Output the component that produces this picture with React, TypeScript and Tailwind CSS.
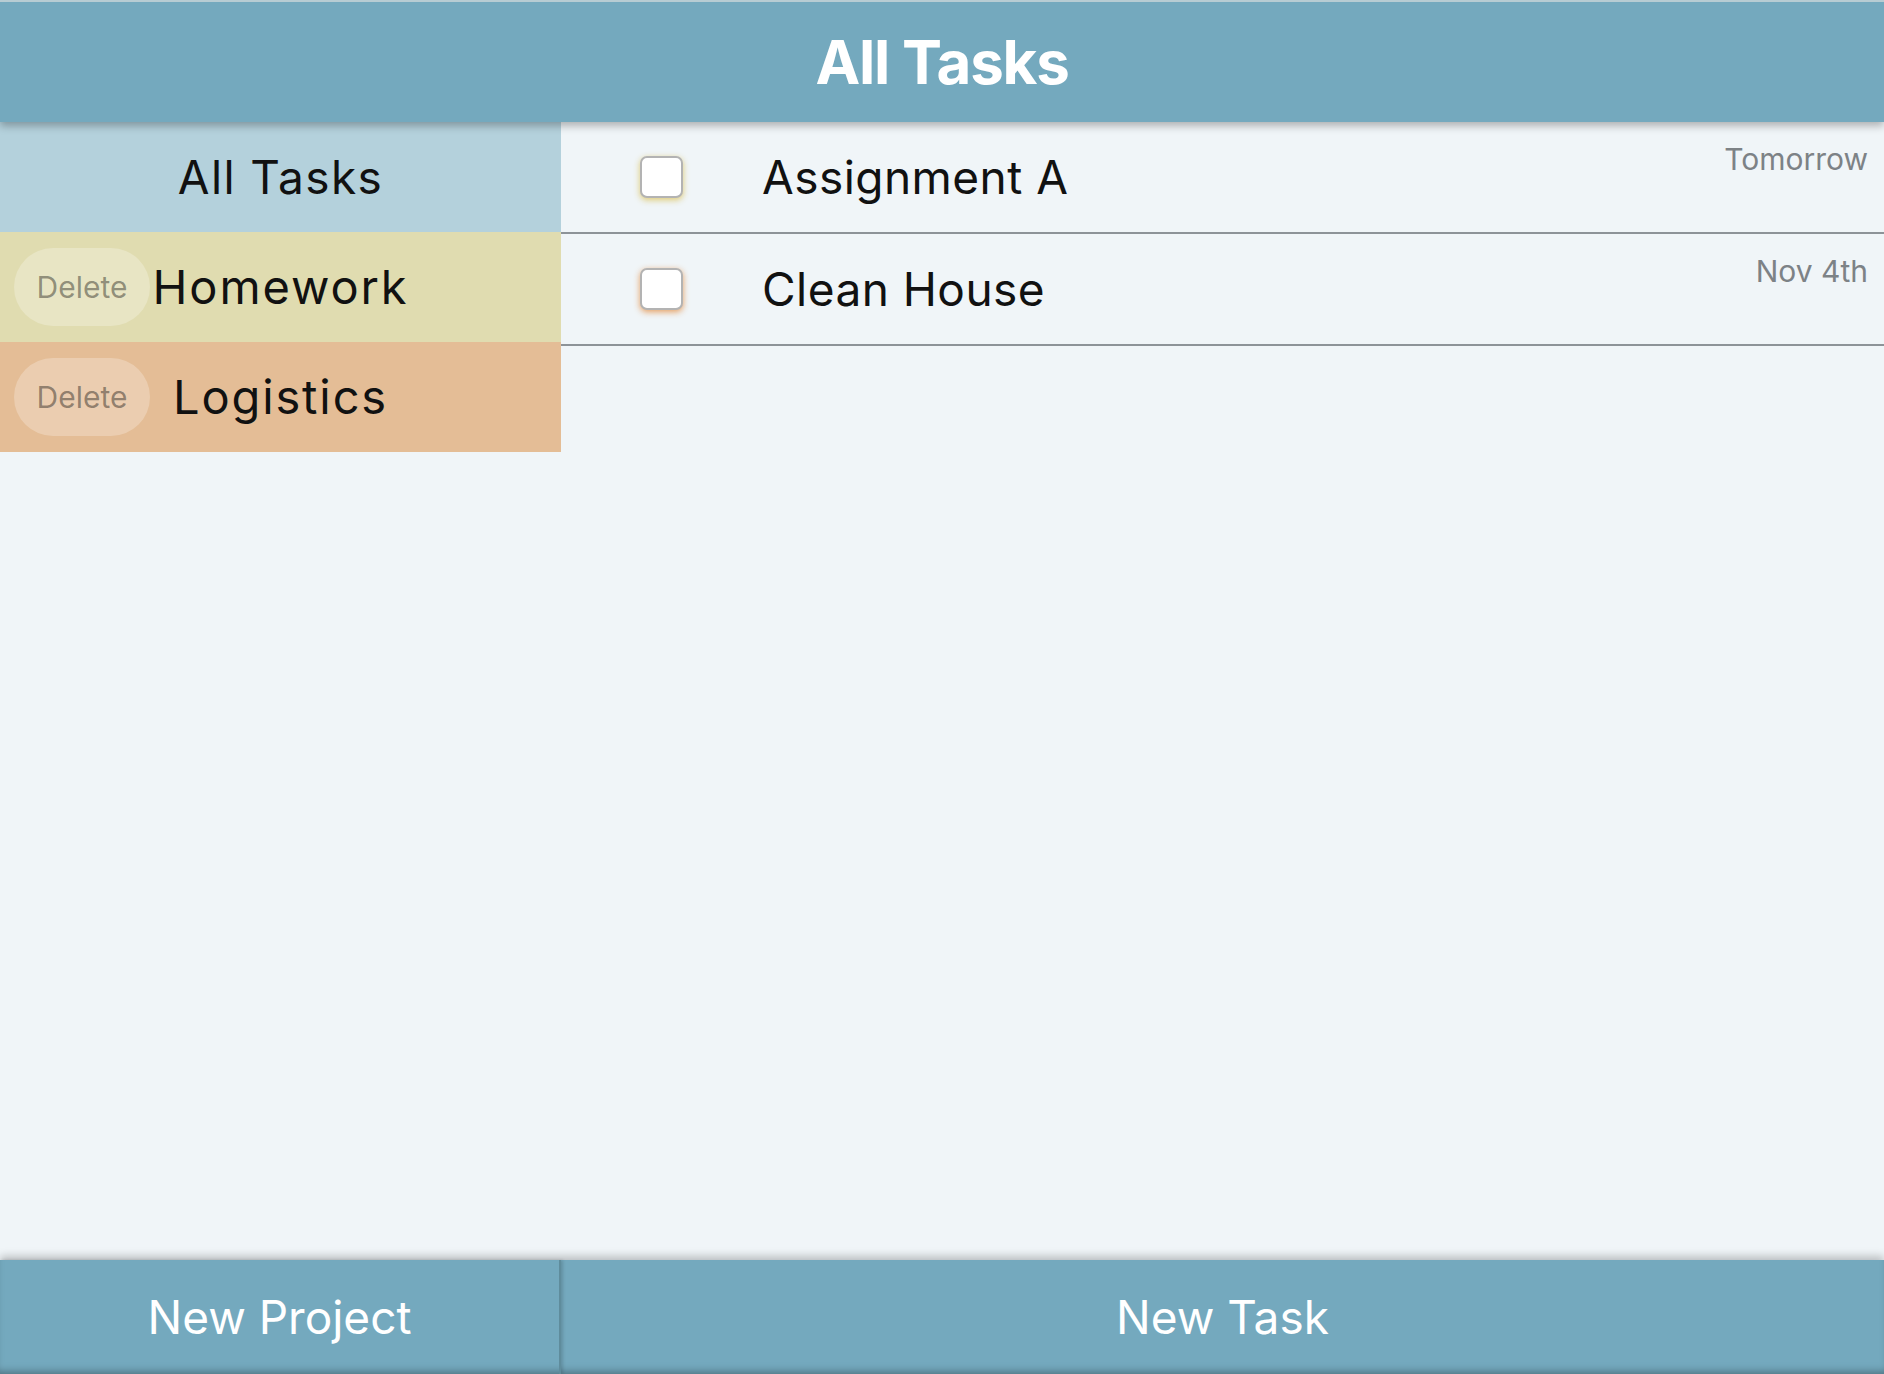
import React from "react";

const projects = [
  { name: "Homework", bg: "bg-[#e0dcb0]" },
  { name: "Logistics", bg: "bg-[#e4bd96]" },
];

const tasks = [
  { title: "Assignment A", due: "Tomorrow", glow: "shadow-[0_2px_6px_rgba(220,196,100,0.9)]" },
  { title: "Clean House", due: "Nov 4th", glow: "shadow-[0_2px_6px_rgba(230,150,80,0.9)]" },
];

export default function App() {
  return (
    <div
      className="flex h-screen w-full flex-col overflow-hidden bg-[#f0f5f8] text-[#111]"
      style={{ fontFamily: 'Inter, "Noto Sans", sans-serif' }}
    >
      <header className="relative z-10 flex h-[122px] shrink-0 items-center justify-center border-t-2 border-[#b7ccd3] bg-[#74a9be] shadow-[0_4px_8px_rgba(0,0,0,0.28)]">
        <h1 className="text-[60px] leading-none font-bold tracking-[-0.02em] text-white">All Tasks</h1>
      </header>

      <div className="flex min-h-0 flex-1">
        <aside className="w-[561px] shrink-0">
          <div className="flex h-[110px] items-center justify-center bg-[#b4d1dc] text-[46px] tracking-[0.03em]">
            All Tasks
          </div>
          {projects.map((p) => (
            <div
              key={p.name}
              className={`relative flex h-[110px] items-center justify-center text-[47px] tracking-[0.04em] ${p.bg}`}
            >
              <button className="absolute top-1/2 left-[14px] flex h-[78px] w-[136px] -translate-y-1/2 items-center justify-center rounded-full bg-white/25 text-[30px] tracking-normal text-black/40">
                Delete
              </button>
              {p.name}
            </div>
          ))}
        </aside>

        <main className="flex-1">
          {tasks.map((t) => (
            <div key={t.title} className="flex h-[112px] items-center border-b-2 border-[#8d9398]">
              <div className={`ml-[79px] h-[42px] w-[43px] shrink-0 rounded-[7px] border-2 border-[#b3b3b3] bg-white ${t.glow}`} />
              <span className="ml-[79px] text-[46px] tracking-[0.01em]">{t.title}</span>
              <span className="mr-[16px] ml-auto self-start pt-[22px] text-[30px] leading-none text-[#7d8286]">{t.due}</span>
            </div>
          ))}
        </main>
      </div>

      <footer className="relative z-10 flex h-[114px] shrink-0 bg-[#74a9be] text-[46px] text-white shadow-[0_-4px_8px_rgba(0,0,0,0.22),inset_0_-7px_8px_-5px_rgba(0,0,0,0.35)]">
        <button className="flex w-[561px] items-center justify-center border-r-2 border-[#5f8c9c] shadow-[2px_0_3px_rgba(0,0,0,0.15)]">New Project</button>
        <button className="flex flex-1 items-center justify-center">New Task</button>
      </footer>
    </div>
  );
}
